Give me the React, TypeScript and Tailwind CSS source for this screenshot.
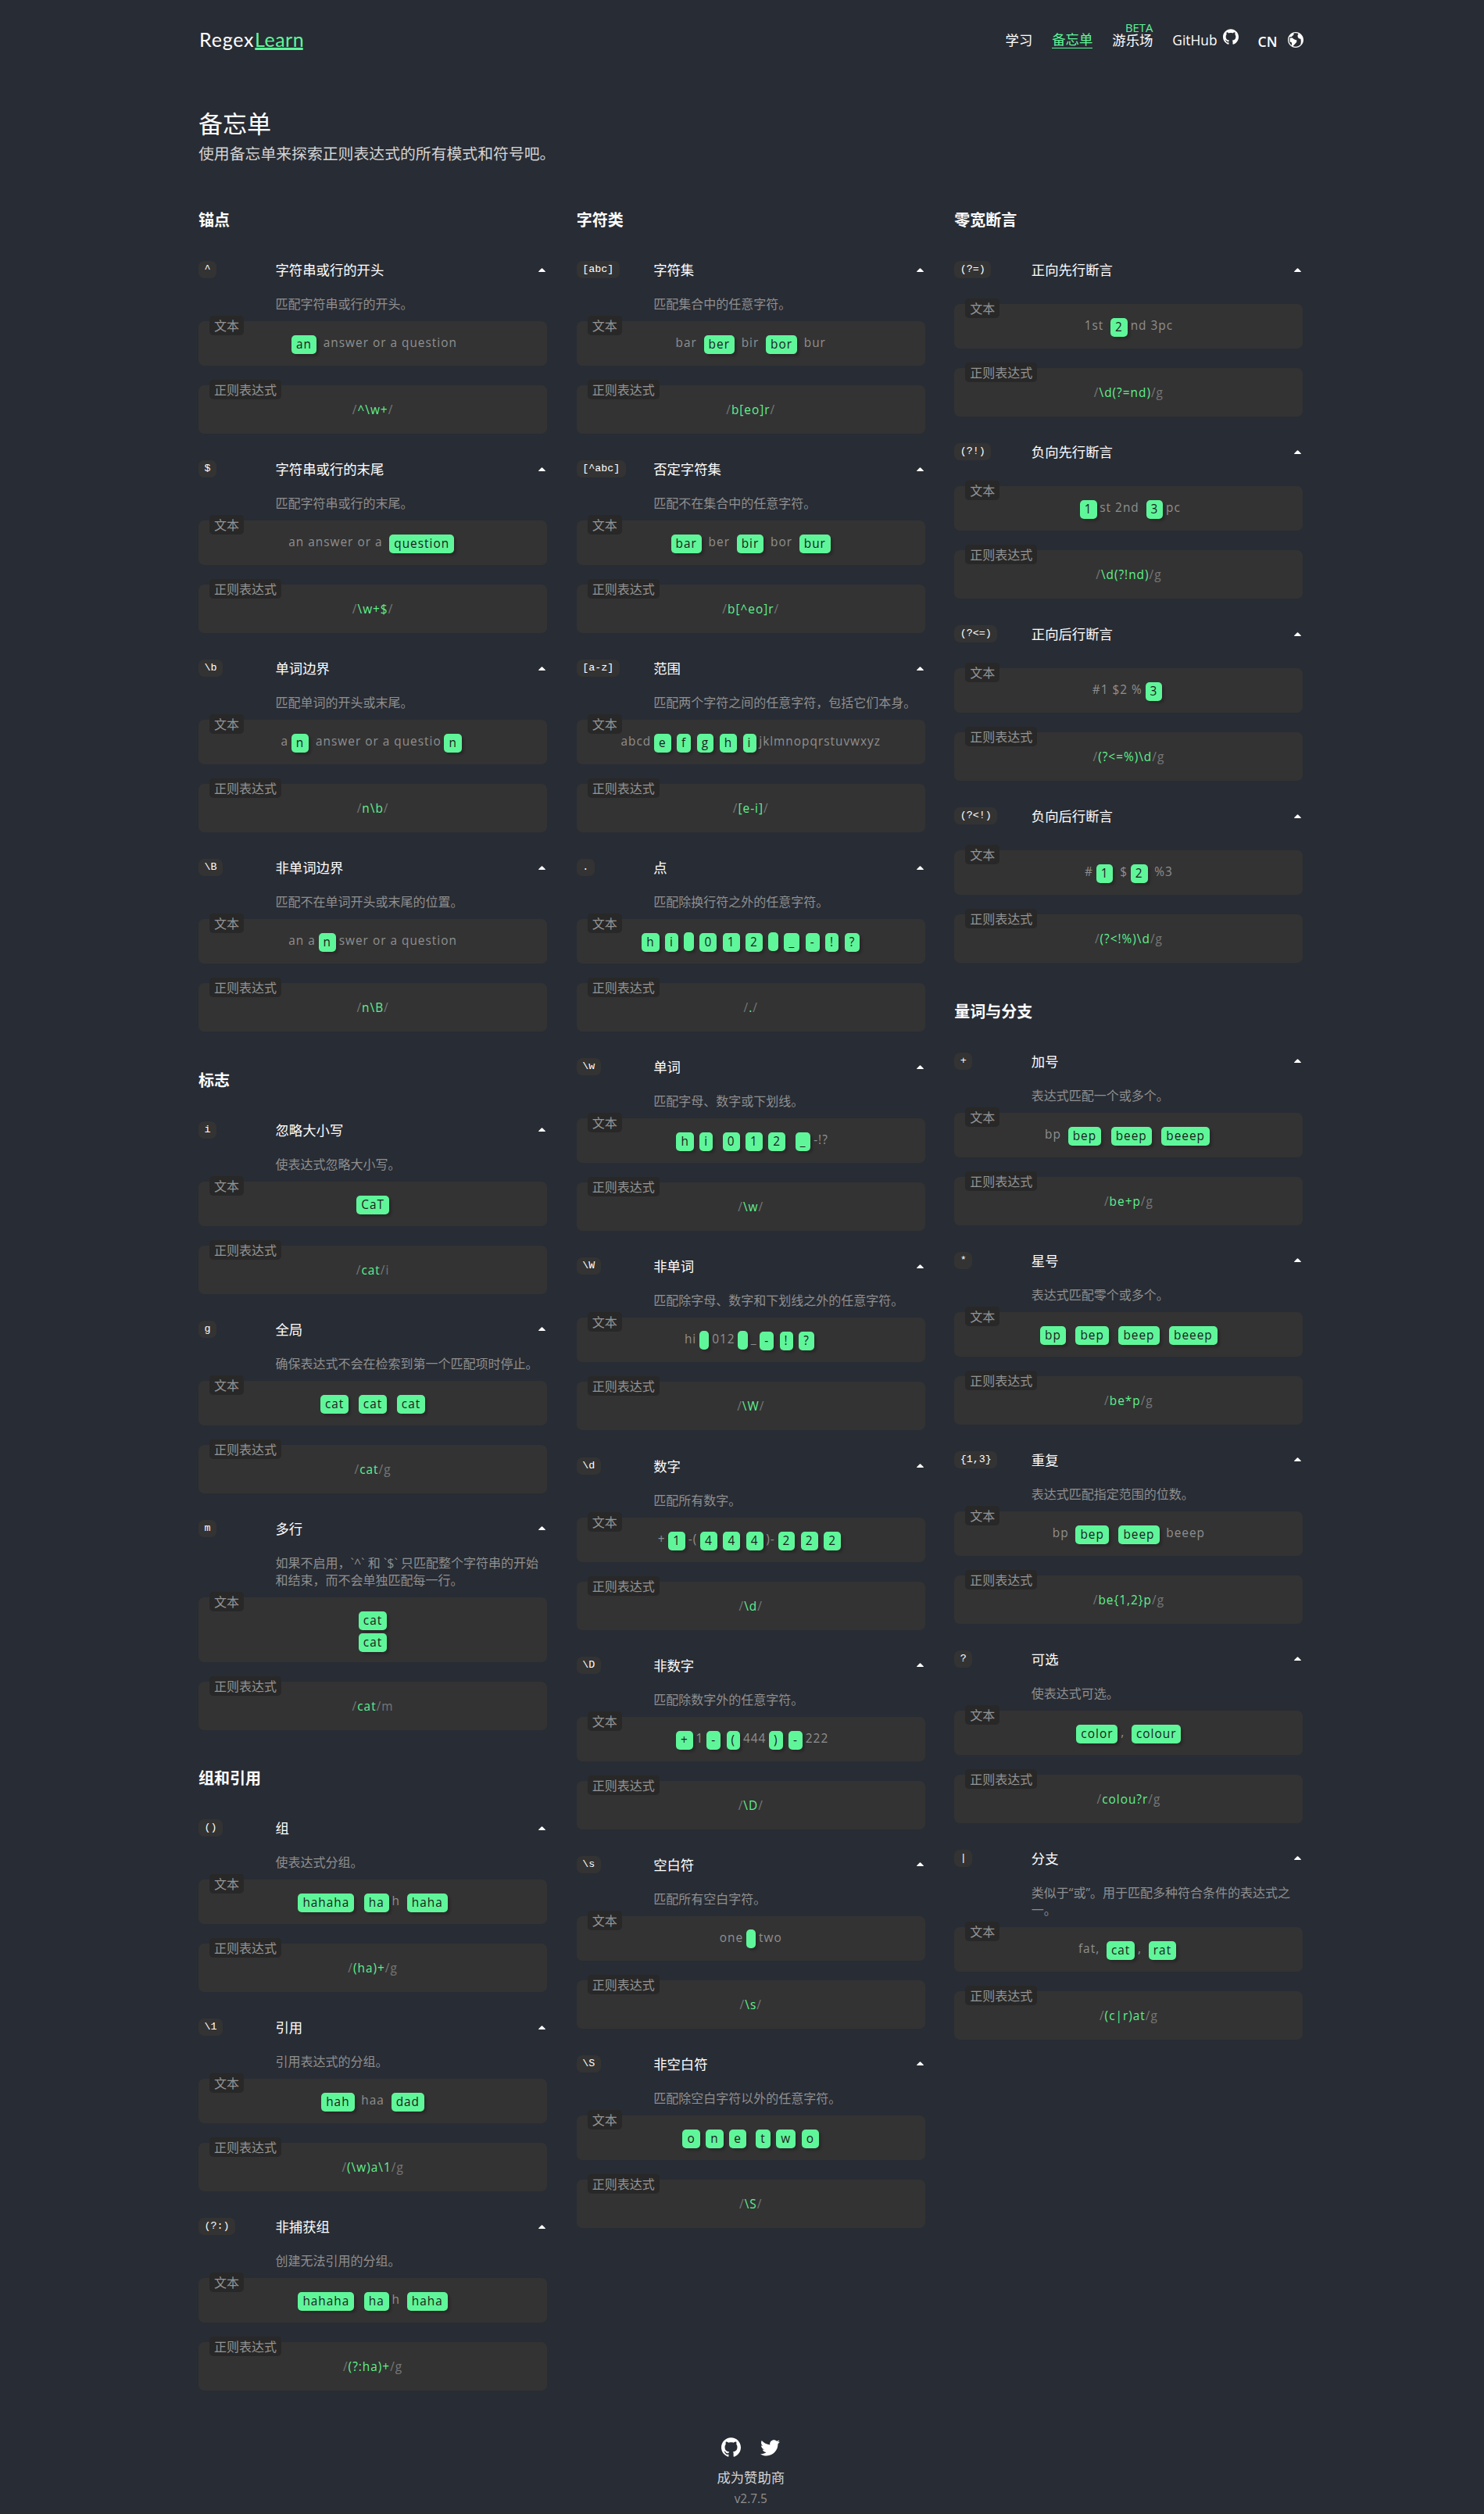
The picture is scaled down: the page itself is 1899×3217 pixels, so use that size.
import { Fragment } from "react";
import { ImEarth, ImGithub, ImTwitter } from "react-icons/im";

type Item = {
  code: string;
  title: string;
  desc?: string;
  /** Sample text; matches are wrapped in « ». */
  text: string;
  regex: string;
  flags?: string;
};

type Group = { title: string; items: Item[] };

const columns: Group[][] = [
  [
    {
      title: "锚点",
      items: [
        { code: "^", title: "字符串或行的开头", desc: "匹配字符串或行的开头。", text: "«an» answer or a question", regex: "^\\w+" },
        { code: "$", title: "字符串或行的末尾", desc: "匹配字符串或行的末尾。", text: "an answer or a «question»", regex: "\\w+$" },
        { code: "\\b", title: "单词边界", desc: "匹配单词的开头或末尾。", text: "a«n» answer or a questio«n»", regex: "n\\b" },
        { code: "\\B", title: "非单词边界", desc: "匹配不在单词开头或末尾的位置。", text: "an a«n»swer or a question", regex: "n\\B" },
      ],
    },
    {
      title: "标志",
      items: [
        { code: "i", title: "忽略大小写", desc: "使表达式忽略大小写。", text: "«CaT»", regex: "cat", flags: "i" },
        { code: "g", title: "全局", desc: "确保表达式不会在检索到第一个匹配项时停止。", text: "«cat» «cat» «cat»", regex: "cat", flags: "g" },
        { code: "m", title: "多行", desc: "如果不启用，`^` 和 `$` 只匹配整个字符串的开始和结束，而不会单独匹配每一行。", text: "«cat»\n«cat»", regex: "cat", flags: "m" },
      ],
    },
    {
      title: "组和引用",
      items: [
        { code: "()", title: "组", desc: "使表达式分组。", text: "«hahaha» «ha»h «haha»", regex: "(ha)+", flags: "g" },
        { code: "\\1", title: "引用", desc: "引用表达式的分组。", text: "«hah» haa «dad»", regex: "(\\w)a\\1", flags: "g" },
        { code: "(?:)", title: "非捕获组", desc: "创建无法引用的分组。", text: "«hahaha» «ha»h «haha»", regex: "(?:ha)+", flags: "g" },
      ],
    },
  ],
  [
    {
      title: "字符类",
      items: [
        { code: "[abc]", title: "字符集", desc: "匹配集合中的任意字符。", text: "bar «ber» bir «bor» bur", regex: "b[eo]r" },
        { code: "[^abc]", title: "否定字符集", desc: "匹配不在集合中的任意字符。", text: "«bar» ber «bir» bor «bur»", regex: "b[^eo]r" },
        { code: "[a-z]", title: "范围", desc: "匹配两个字符之间的任意字符，包括它们本身。", text: "abcd«e»«f»«g»«h»«i»jklmnopqrstuvwxyz", regex: "[e-i]" },
        { code: ".", title: "点", desc: "匹配除换行符之外的任意字符。", text: "«h»«i»« »«0»«1»«2»« »«_»«-»«!»«?»", regex: "." },
        { code: "\\w", title: "单词", desc: "匹配字母、数字或下划线。", text: "«h»«i» «0»«1»«2» «_»-!?", regex: "\\w" },
        { code: "\\W", title: "非单词", desc: "匹配除字母、数字和下划线之外的任意字符。", text: "hi« »012« »_«-»«!»«?»", regex: "\\W" },
        { code: "\\d", title: "数字", desc: "匹配所有数字。", text: "+«1»-(«4»«4»«4»)-«2»«2»«2»", regex: "\\d" },
        { code: "\\D", title: "非数字", desc: "匹配除数字外的任意字符。", text: "«+»1«-»«(»444«)»«-»222", regex: "\\D" },
        { code: "\\s", title: "空白符", desc: "匹配所有空白字符。", text: "one« »two", regex: "\\s" },
        { code: "\\S", title: "非空白符", desc: "匹配除空白字符以外的任意字符。", text: "«o»«n»«e» «t»«w»«o»", regex: "\\S" },
      ],
    },
  ],
  [
    {
      title: "零宽断言",
      items: [
        { code: "(?=)", title: "正向先行断言", text: "1st «2»nd 3pc", regex: "\\d(?=nd)", flags: "g" },
        { code: "(?!)", title: "负向先行断言", text: "«1»st 2nd «3»pc", regex: "\\d(?!nd)", flags: "g" },
        { code: "(?<=)", title: "正向后行断言", text: "#1 $2 %«3»", regex: "(?<=%)\\d", flags: "g" },
        { code: "(?<!)", title: "负向后行断言", text: "#«1» $«2» %3", regex: "(?<!%)\\d", flags: "g" },
      ],
    },
    {
      title: "量词与分支",
      items: [
        { code: "+", title: "加号", desc: "表达式匹配一个或多个。", text: "bp «bep» «beep» «beeep»", regex: "be+p", flags: "g" },
        { code: "*", title: "星号", desc: "表达式匹配零个或多个。", text: "«bp» «bep» «beep» «beeep»", regex: "be*p", flags: "g" },
        { code: "{1,3}", title: "重复", desc: "表达式匹配指定范围的位数。", text: "bp «bep» «beep» beeep", regex: "be{1,2}p", flags: "g" },
        { code: "?", title: "可选", desc: "使表达式可选。", text: "«color», «colour»", regex: "colou?r", flags: "g" },
        { code: "|", title: "分支", desc: "类似于“或”。用于匹配多种符合条件的表达式之一。", text: "fat, «cat», «rat»", regex: "(c|r)at", flags: "g" },
      ],
    },
  ],
];

function Match({ children }: { children: string }) {
  if (!children.trim()) {
    return (
      <span className="relative top-[2px] mx-[3.75px] inline-block h-6 w-[12.5px] rounded-[5px] bg-[#5ff69a] align-[-6px] shadow-[3px_3px_3px_rgba(0,0,0,0.2)]" />
    );
  }
  return (
    <span className="relative top-[2px] mx-[3.75px] inline-block h-6 rounded-[5px] bg-[#5ff69a] px-1.5 leading-6 text-[#1c1c1c] shadow-[3px_3px_3px_rgba(0,0,0,0.2)]">
      {children}
    </span>
  );
}

function Sample({ text }: { text: string }) {
  return (
    <>
      {text.split("\n").map((line, i) => (
        <div key={i}>
          {line.split(/(«[^»]*»)/).map((part, j) =>
            part.startsWith("«") ? <Match key={j}>{part.slice(1, -1)}</Match> : <Fragment key={j}>{part}</Fragment>,
          )}
        </div>
      ))}
    </>
  );
}

function BoxLabel({ children }: { children: string }) {
  return (
    <span className="absolute -top-[7px] left-[14px] h-[25px] rounded-[5px] bg-[#282828] px-1.5 text-base leading-[26px] tracking-normal text-[#949494]">
      {children}
    </span>
  );
}

function CheatItem({ item }: { item: Item }) {
  return (
    <div className="pb-[34.1px]">
      <div className="flex h-[22px] items-center">
        <div className="flex w-[98.5px] shrink-0">
          <span className="h-[22px] rounded-[7px] bg-[#333] px-[7.5px] font-['Liberation_Mono','Noto_Sans_CJK_SC',monospace] text-[13.33px] leading-[22px] text-white">
            {item.code}
          </span>
        </div>
        <h3 className="grow text-[17.35px] leading-[22px] text-white">{item.title}</h3>
        <svg viewBox="0 0 9 5" className="mr-[2px] h-[5px] w-[9px] fill-white">
          <path d="M0.4 5 Q-0.2 4.6 0.4 4.1 L3.9 0.4 Q4.5 -0.1 5.1 0.4 L8.6 4.1 Q9.2 4.6 8.6 5 Z" />
        </svg>
      </div>
      <div className="ml-[98.5px] pt-[22px] pb-[11px]">
        {item.desc && <p className="text-base leading-[22px] text-[#8f8f8f]">{item.desc}</p>}
      </div>
      <div className="relative mb-[25px] min-h-[57px] rounded-[7px] bg-[#333] pt-[14px] pb-[13px] text-center text-[15.4px] leading-[28px] tracking-[1px] text-[#8f8f8f]">
        <BoxLabel>文本</BoxLabel>
        <Sample text={item.text} />
      </div>
      <div className="relative h-[62px] rounded-[7px] bg-[#333] pt-[18px] text-center text-[15.4px] leading-[28px] tracking-[1px] text-[#777]">
        <BoxLabel>正则表达式</BoxLabel>
        <span>/</span>
        <span className="font-medium text-[#5ff08f]">{item.regex}</span>
        <span>/{item.flags}</span>
      </div>
    </div>
  );
}

export default function App() {
  return (
    <div className="h-[3217px] overflow-hidden bg-[#282c34] font-['Open_Sans','Noto_Sans_CJK_SC',sans-serif] text-white">
      <div className="ml-[254px] w-[1413.5px]">
        <header className="flex h-[102px] items-start justify-between">
          <a className="flex pt-[31px] pl-px font-['Lato',sans-serif] text-[25px] leading-[38px]">
            <span className="w-[71px] tracking-[0.8px]">Regex</span>
            <span className="relative w-[61px] tracking-[0.5px] text-[#5ff69a]">
              Learn
              <span className="absolute top-[30px] left-0 h-[3px] w-[62px] rounded-full bg-[#5ff69a]" />
            </span>
          </a>
          <nav className="flex gap-[25px] pt-[36px] text-[17.35px] leading-[30px]">
            <a>学习</a>
            <a className="h-[26px] border-b border-[#5ff69a] leading-[29px] text-[#5ff69a]">备忘单</a>
            <a className="relative">
              <span className="absolute -top-[8px] right-0 text-[14.8px] leading-[14px] text-[#5ff69a]">BETA</span>
              游乐场
            </a>
            <a className="flex gap-[7px]">
              GitHub <ImGithub className="mt-px size-5" />
            </a>
            <a className="flex gap-[13px]">
              <span className="text-[17.6px] leading-[35px] font-semibold">CN</span>
              <ImEarth className="mt-[5px] size-5" />
            </a>
          </nav>
        </header>

        <section className="h-[164px] pt-[36px]">
          <h1 className="text-[31px] leading-[40px]">备忘单</h1>
          <p className="text-[19.85px] leading-[38px] text-[#d4d4d4]">使用备忘单来探索正则表达式的所有模式和符号吧。</p>
        </section>

        <main className="grid grid-cols-3 gap-x-[37.5px]">
          {columns.map((groups, c) => (
            <div key={c}>
              {groups.map((group) => (
                <section key={group.title} className="pb-[12.2px]">
                  <h2 className="mb-[36px] h-8 text-xl leading-8 font-bold">{group.title}</h2>
                  {group.items.map((item) => (
                    <CheatItem key={item.code} item={item} />
                  ))}
                </section>
              ))}
            </div>
          ))}
        </main>

        <footer className="flex flex-col items-center pt-[13px]">
          <div className="flex gap-[25px]">
            <ImGithub className="size-[25px]" />
            <ImTwitter className="size-[25px]" />
          </div>
          <p className="mt-[12.5px] text-[17.35px] leading-[28px] text-[#d4d4d4]">成为赞助商</p>
          <p className="text-[15.4px] leading-[28px] text-[#8f8f8f]">v2.7.5</p>
        </footer>
      </div>
    </div>
  );
}
